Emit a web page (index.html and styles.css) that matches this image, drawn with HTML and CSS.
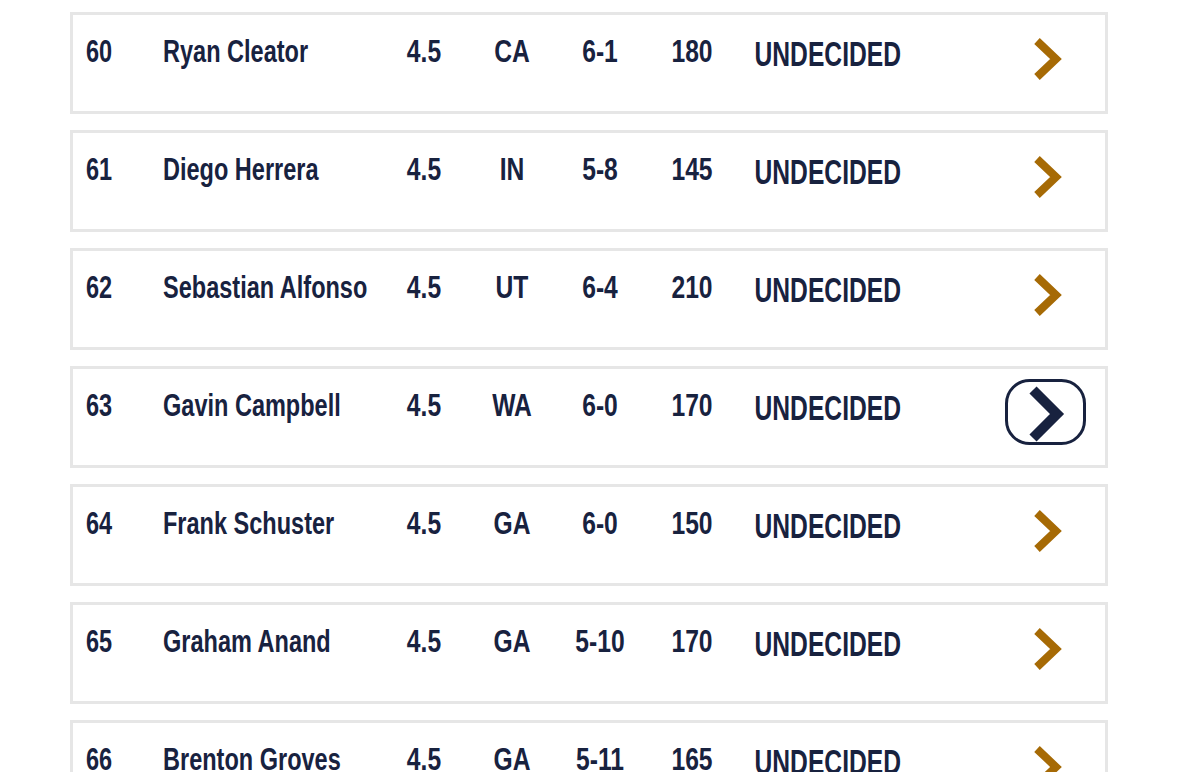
FILE: index.html
```html
<!DOCTYPE html>
<html>
<head>
<meta charset="utf-8">
<link rel="stylesheet" href="styles.css">
</head>
<body>
<div class="list">
  <div class="row">
    <span class="cell num">60</span><span class="cell name">Ryan Cleator</span><span class="cell c">4.5</span><span class="cell c">CA</span><span class="cell c">6-1</span><span class="cell c">180</span><span class="cell status">UNDECIDED</span>
    <span class="go"><svg class="chev" viewBox="0 0 34 50" width="34" height="50"><polyline points="8,7 27,25 8,43"/></svg></span>
  </div>
  <div class="row">
    <span class="cell num">61</span><span class="cell name">Diego Herrera</span><span class="cell c">4.5</span><span class="cell c">IN</span><span class="cell c">5-8</span><span class="cell c">145</span><span class="cell status">UNDECIDED</span>
    <span class="go"><svg class="chev" viewBox="0 0 34 50" width="34" height="50"><polyline points="8,7 27,25 8,43"/></svg></span>
  </div>
  <div class="row">
    <span class="cell num">62</span><span class="cell name">Sebastian Alfonso</span><span class="cell c">4.5</span><span class="cell c">UT</span><span class="cell c">6-4</span><span class="cell c">210</span><span class="cell status">UNDECIDED</span>
    <span class="go"><svg class="chev" viewBox="0 0 34 50" width="34" height="50"><polyline points="8,7 27,25 8,43"/></svg></span>
  </div>
  <div class="row">
    <span class="cell num">63</span><span class="cell name">Gavin Campbell</span><span class="cell c">4.5</span><span class="cell c">WA</span><span class="cell c">6-0</span><span class="cell c">170</span><span class="cell status">UNDECIDED</span>
    <span class="go go-active"><svg class="chev-active" viewBox="0 0 81 66" width="81" height="66"><rect x="1.5" y="1.5" width="78" height="63" rx="23" ry="23"/><polyline points="28,11 52,35 28,59"/></svg></span>
  </div>
  <div class="row">
    <span class="cell num">64</span><span class="cell name">Frank Schuster</span><span class="cell c">4.5</span><span class="cell c">GA</span><span class="cell c">6-0</span><span class="cell c">150</span><span class="cell status">UNDECIDED</span>
    <span class="go"><svg class="chev" viewBox="0 0 34 50" width="34" height="50"><polyline points="8,7 27,25 8,43"/></svg></span>
  </div>
  <div class="row">
    <span class="cell num">65</span><span class="cell name">Graham Anand</span><span class="cell c">4.5</span><span class="cell c">GA</span><span class="cell c">5-10</span><span class="cell c">170</span><span class="cell status">UNDECIDED</span>
    <span class="go"><svg class="chev" viewBox="0 0 34 50" width="34" height="50"><polyline points="8,7 27,25 8,43"/></svg></span>
  </div>
  <div class="row">
    <span class="cell num">66</span><span class="cell name">Brenton Groves</span><span class="cell c">4.5</span><span class="cell c">GA</span><span class="cell c">5-11</span><span class="cell c">165</span><span class="cell status">UNDECIDED</span>
    <span class="go"><svg class="chev" viewBox="0 0 34 50" width="34" height="50"><polyline points="8,7 27,25 8,43"/></svg></span>
  </div>
</div>
</body>
</html>
```
FILE: styles.css
```css
html, body {
  margin: 0;
  padding: 0;
  background: #ffffff;
  overflow: hidden;
}

body {
  font-family: "Liberation Sans", Arial, sans-serif;
  color: #18223f;
}

.list {
  display: flex;
  flex-direction: column;
  gap: 16px;
  padding-top: 12px;
  margin-left: 70px;
  width: 1038px;
}

.row {
  display: grid;
  grid-template-columns: 77px 223px 76px 100px 76px 108px 240px 1fr;
  align-items: start;
  border: 3px solid #e6e6e6;
  padding: 23px 0 0 13px;
  box-sizing: content-box;
  height: 73px;
}

.cell {
  display: block;
  font-weight: 700;
  font-size: 28px;
  line-height: 28px;
  white-space: nowrap;
  transform: scale(0.84, 1.15);
  transform-origin: left center;
}

.c {
  text-align: center;
  transform: scale(0.88, 1.15);
  transform-origin: center center;
}

.status {
  font-size: 29px;
  line-height: 29px;
  margin-top: 2px;
  padding-left: 10px;
  transform: scale(0.85, 1.2);
  transform-origin: left center;
}

.go {
  display: flex;
  justify-content: center;
  margin-top: -4px;
}

.chev polyline {
  fill: none;
  stroke: #a66a05;
  stroke-width: 8;
  stroke-linecap: butt;
  stroke-linejoin: miter;
}

.go-active {
  margin-top: -13px;
}

.chev-active rect {
  fill: #ffffff;
  stroke: #18223f;
  stroke-width: 3;
}

.chev-active polyline {
  fill: none;
  stroke: #18223f;
  stroke-width: 10;
  stroke-linecap: butt;
  stroke-linejoin: miter;
}
```
